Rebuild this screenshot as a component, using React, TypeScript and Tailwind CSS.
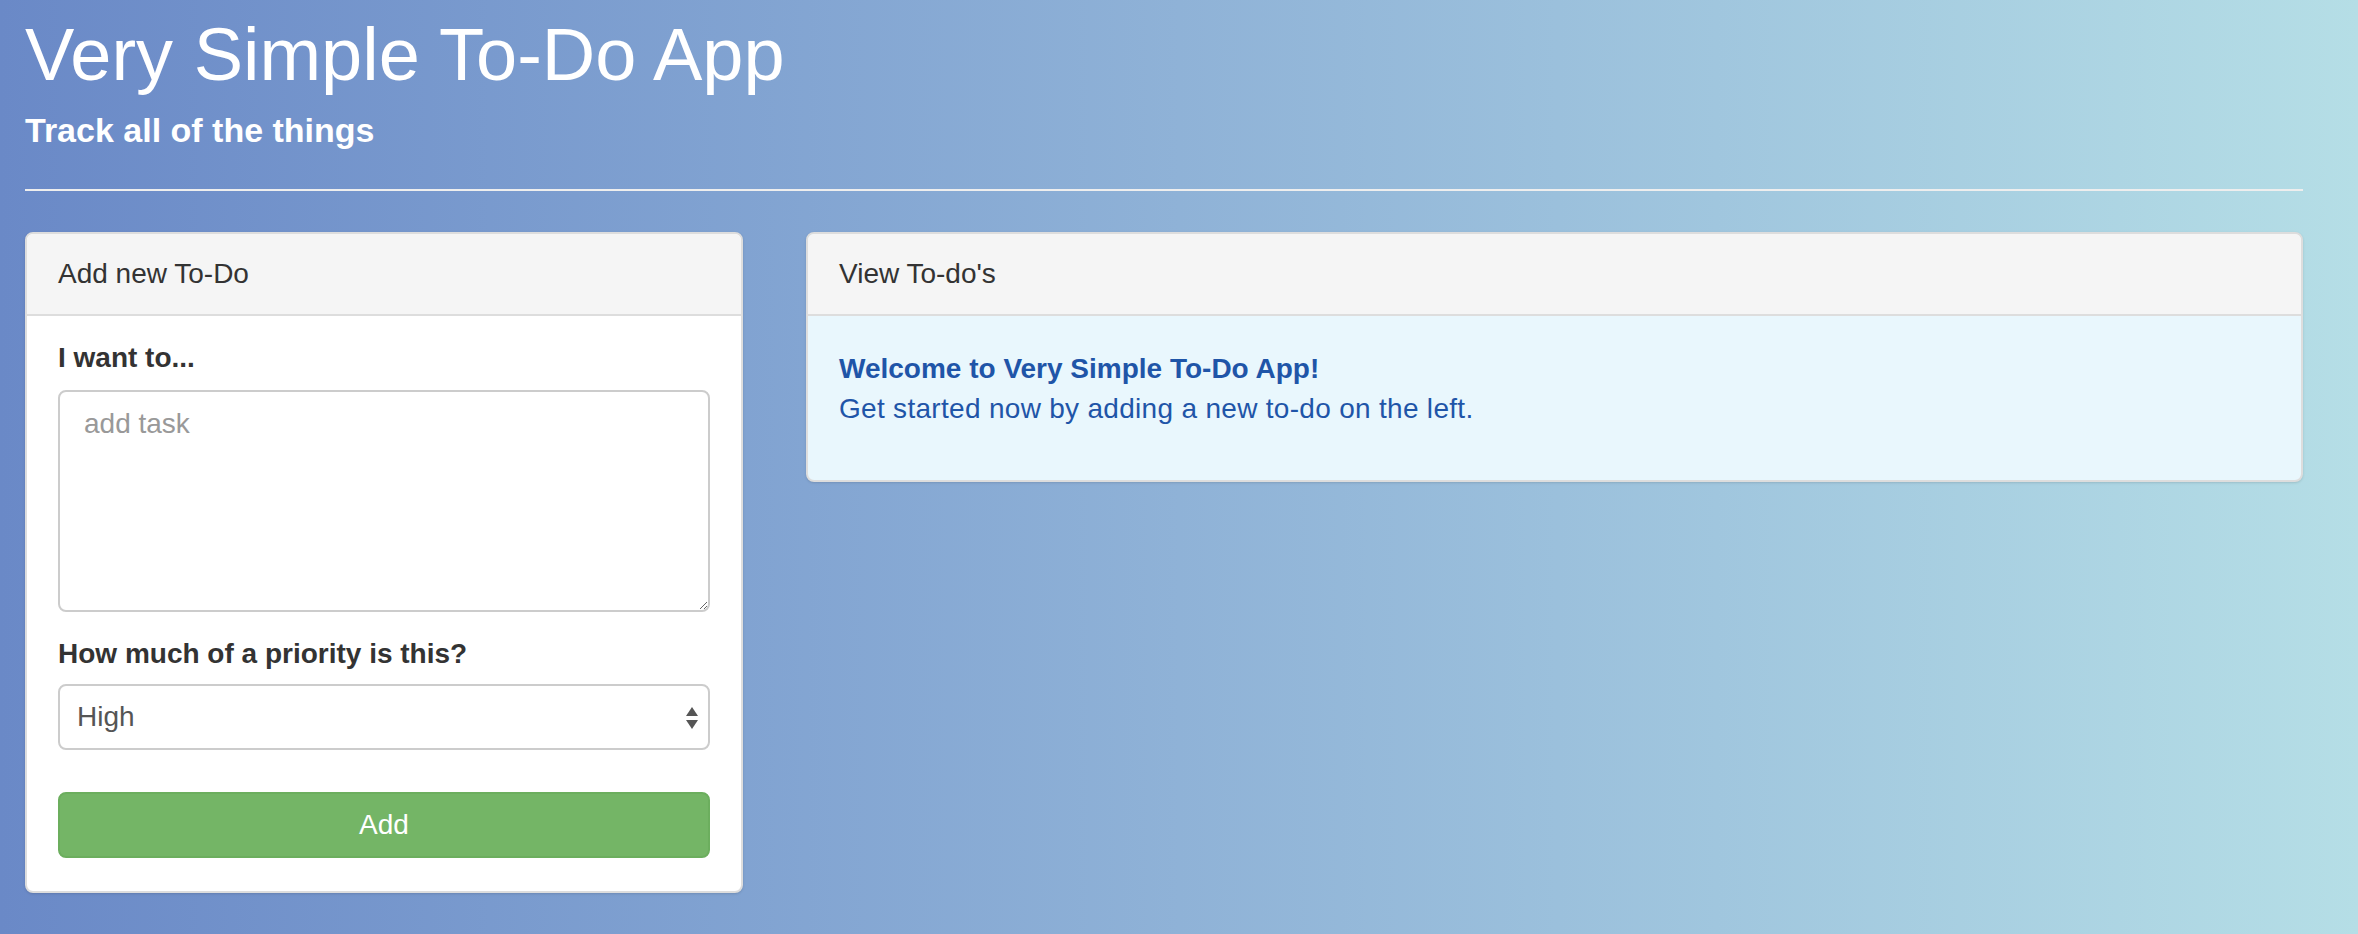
import { useState } from 'react';

export default function App() {
    const [task, setTask] = useState('');
    const [priority, setPriority] = useState('high');

    return (
        <div className="min-h-screen bg-gradient-to-r from-[#6a89c7] via-[#8fb2d7] to-[#b5dee6] font-['Liberation_Sans','Helvetica_Neue',Arial,sans-serif] text-[#333]">
            <div className="pl-[25px] pr-[55px] pt-[15px]">
                {/* Header */}
                <h1 className="text-[74px] leading-[80px] font-normal text-white">Very Simple To-Do App</h1>
                <h4 className="mt-[17px] text-[34px] leading-[1.1] font-bold text-white">Track all of the things</h4>
                <hr className="mt-[40px] border-0 border-t-2 border-[#eeeeee]" />

                <div className="mt-[41px] flex gap-[63px] items-start">
                    {/* Add panel */}
                    <div className="w-[718px] shrink-0 bg-white border-2 border-[#dddddd] rounded-[8px] shadow-sm overflow-hidden">
                        <div className="bg-[#f5f5f5] border-b-2 border-[#dddddd] px-[31px] py-[20px] text-[28px] leading-[40px]">
                            Add new To-Do
                        </div>
                        <div className="px-[31px] pt-[22px] pb-[33px]">
                            <label className="block text-[28px] leading-[40px] font-bold mb-[12px]">I want to...</label>
                            <textarea
                                value={task}
                                onChange={(e) => setTask(e.target.value)}
                                placeholder="add task"
                                className="block w-full h-[222px] border-2 border-[#cccccc] rounded-[8px] px-[24px] py-[12px] text-[28px] leading-[40px] text-[#555] placeholder:text-[#999] outline-none"
                            />
                            <label className="block mt-[22px] mb-[10px] text-[28px] leading-[40px] font-bold">How much of a priority is this?</label>
                            <div className="relative">
                                <select
                                    value={priority}
                                    onChange={(e) => setPriority(e.target.value)}
                                    className="block w-full h-[66px] appearance-none bg-white border-2 border-[#cccccc] rounded-[8px] pl-[17px] pr-[40px] text-[28px] text-[#555] outline-none"
                                >
                                    <option value="high">High</option>
                                    <option value="medium">Medium</option>
                                    <option value="low">Low</option>
                                </select>
                                <svg className="absolute right-[11px] top-[22px] pointer-events-none" width="14" height="24" viewBox="0 0 14 24">
                                    <polygon points="7,1 13,10 1,10" fill="#555" />
                                    <polygon points="1,14 13,14 7,23" fill="#555" />
                                </svg>
                            </div>
                            <button className="mt-[42px] w-full h-[66px] bg-[#74b566] border-2 border-[#6cae5e] rounded-[8px] text-white text-[28px]">
                                Add
                            </button>
                        </div>
                    </div>

                    {/* View panel */}
                    <div className="flex-1 bg-[#e9f7fd] border-2 border-[#dddddd] rounded-[8px] shadow-sm overflow-hidden">
                        <div className="bg-[#f5f5f5] border-b-2 border-[#dddddd] px-[31px] py-[20px] text-[28px] leading-[40px]">
                            View To-do's
                        </div>
                        <div className="px-[31px] pt-[33px] pb-[51px] text-[28px] leading-[40px] text-[#1f55a8]">
                            <div className="font-bold">Welcome to Very Simple To-Do App!</div>
                            <div className="tracking-[0.3px]">Get started now by adding a new to-do on the left.</div>
                        </div>
                    </div>
                </div>
            </div>
        </div>
    );
}
